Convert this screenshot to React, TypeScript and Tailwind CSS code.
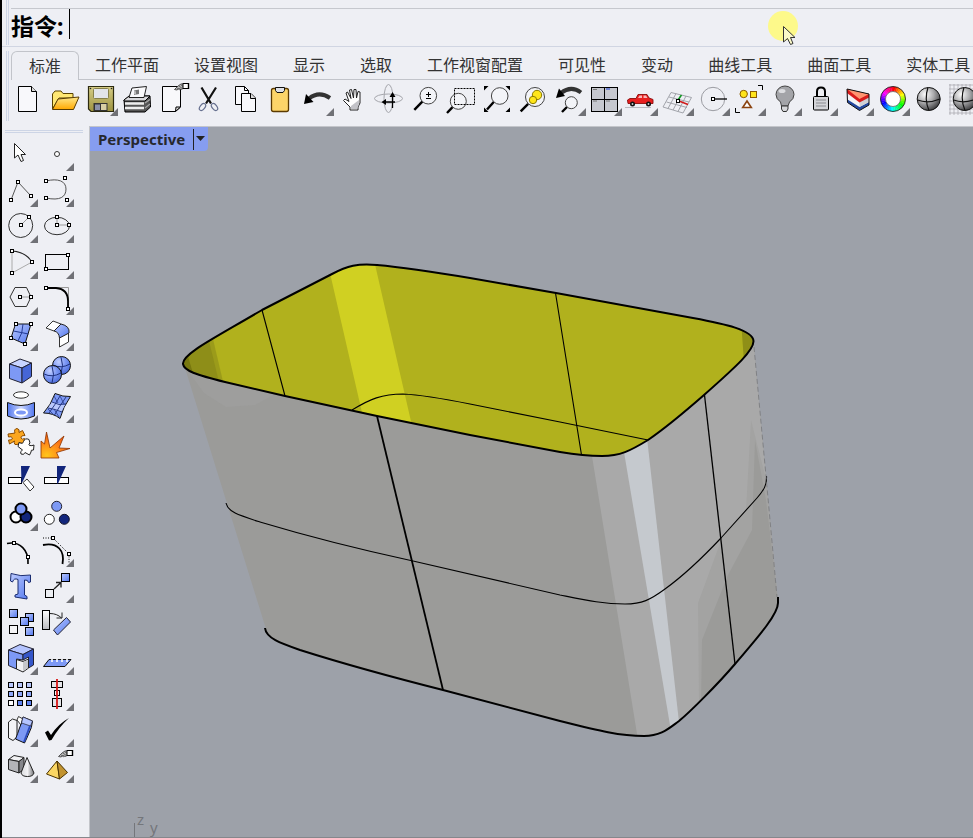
import type { ReactNode } from "react";

type Tool = { name: string; art: ReactNode; more?: boolean };

const BLUE = "#7d99f5";
const NAVY = "#12267c";

/* Small square grip drawn on curve control points. */
function Grip({ x, y }: { x: number; y: number }) {
  return <rect x={x - 1.5} y={y - 1.5} width="3" height="3" fill="#fff" stroke="#000" shapeRendering="crispEdges" />;
}

function Box({ x, y, w = 8, h = 8, fill = "url(#blueGrad)" }: { x: number; y: number; w?: number; h?: number; fill?: string }) {
  return <rect x={x} y={y} width={w} height={h} fill={fill} stroke="#000" />;
}

function Lens({ cx, cy, r, hx, hy }: { cx: number; cy: number; r: number; hx: number; hy: number }) {
  const d = r * 0.72;
  return (
    <>
      <path d={`M${cx - d} ${cy + d}L${hx} ${hy}`} stroke="#000" strokeWidth="2.4" />
      <circle cx={cx} cy={cy} r={r} fill="#f6f7fa" fillOpacity="0.6" stroke="#444" />
    </>
  );
}

function PointingHand() {
  return (
    <>
      <path d="M19.5 7.5L23 4L26 2L30 1.5H32V6H29L26 7.5L24 6.5L22 8Z" fill="#b9b9b9" stroke="#333" strokeWidth="0.8" />
      <path d="M22 6l3 2M24 4l4 3M26 3l3 2" stroke="#444" strokeWidth="0.7" />
      <path d="M28 1.5h5.5v5H28Z" fill="#fff" stroke="#000" />
      <path d="M33.5 1v6" stroke="#000" strokeWidth="1.4" />
    </>
  );
}

function Sphere() {
  return (
    <>
      <circle cx="17.7" cy="17" r="11.5" fill="url(#sphereGrad)" stroke="#111" />
      <path d="M6.5 18Q17 22 29 17M17 5.5Q13 17 18 28.5" stroke="#111" strokeWidth="1.2" fill="none" />
    </>
  );
}

/* Hue ring: red at the top, running clockwise through yellow, green and blue. */
function ColourWheel() {
  const steps = 36;
  return (
    <>
      {Array.from({ length: steps }, (_, i) => {
        const a = (i * 2 * Math.PI) / steps;
        const b = ((i + 1.15) * 2 * Math.PI) / steps;
        const p = (r: number, t: number) => `${18 + r * Math.sin(t)} ${17 - r * Math.cos(t)}`;
        return (
          <path
            key={i}
            d={`M${p(12.5, a)}L${p(12.5, b)}L${p(7.5, b)}L${p(7.5, a)}Z`}
            fill={`hsl(${(i * 360) / steps} 100% 50%)`}
          />
        );
      })}
      <circle cx="18" cy="17" r="12.5" fill="none" stroke="#222" strokeWidth="0.9" />
      <circle cx="18" cy="17" r="7.5" fill="#fff" stroke="#555" strokeWidth="0.7" />
    </>
  );
}

const standardTools: Tool[] = [
  {
    name: "新建",
    art: (
      <>
        <path d="M7.5 4.5H20.5L25.5 9.5V29.5H7.5Z" fill="#f8f8fb" stroke="#000" />
        <path d="M20.5 4.5V9.5H25.5" fill="#ddd" stroke="#000" />
      </>
    ),
  },
  {
    name: "打开",
    art: (
      <>
        <path d="M5.5 27V12L8 9H14L16 11.5H26V16H12Z" fill="#ffe873" stroke="#5a4300" />
        <path d="M11 17L32 15L26.5 27.5L5.5 27.5Z" fill="url(#goldGrad)" stroke="#5a3d00" />
      </>
    ),
  },
  {
    name: "保存",
    more: true,
    art: (
      <>
        <path d="M5.5 4.5H30.5V29.5H8L5.5 27Z" fill="url(#oliveGrad)" stroke="#2c2a10" strokeWidth="1.2" />
        <rect x="10.5" y="6.5" width="15" height="10" rx="1" fill="#e2e4ea" stroke="#86804a" />
        <rect x="10.5" y="21" width="14" height="8" fill="#333" />
        <rect x="12" y="22.5" width="5" height="5.5" fill="#8a90a8" />
        <rect x="18" y="22" width="5.5" height="6" fill="#d8cfa4" />
        <circle cx="7.5" cy="6.5" r="0.8" fill="#222" />
        <circle cx="28.5" cy="6.5" r="0.8" fill="#222" />
      </>
    ),
  },
  {
    name: "打印",
    art: (
      <>
        <path d="M5 18L11 14H31L31.5 25L26 30H6Z" fill="#555" stroke="#000" />
        <path d="M5 18L10 14H31L26 19H5Z" fill="#d9d9dc" stroke="#000" />
        <path d="M6 21.5H25M6 26H25" stroke="#eee" strokeWidth="2.4" fill="none" />
        <path d="M26 21L31 17.5M26 26L31 22" stroke="#aaa" strokeWidth="1.2" fill="none" />
        <path d="M10 15.5L13 6L27.5 4.5L25 15.5Z" fill="#fafafc" stroke="#222" />
        <path d="M15 8.5L20 7.5V12L15 13Z" fill="#777" />
        <path d="M15 8.5L17 9.5V13L15 12Z" fill="#bbb" />
      </>
    ),
  },
  {
    name: "文件属性",
    art: (
      <>
        <path d="M7.5 4.5H25.5V25L20.5 29.5H7.5Z" fill="#f8f8fb" stroke="#000" />
        <path d="M20.5 29.5L21 25H25.5Z" fill="#ddd" stroke="#000" />
        <PointingHand />
      </>
    ),
  },
  {
    name: "剪切",
    art: (
      <>
        <path d="M10.5 5.5L20 21.5M25 5.5L15 21.5" stroke="#111" strokeWidth="2.2" />
        <ellipse cx="11.5" cy="25" rx="2.4" ry="4" transform="rotate(38 11.5 25)" fill="none" stroke="#66708f" strokeWidth="1.2" />
        <ellipse cx="23.5" cy="25" rx="2.4" ry="4" transform="rotate(-38 23.5 25)" fill="none" stroke="#66708f" strokeWidth="1.2" />
      </>
    ),
  },
  {
    name: "复制",
    art: (
      <>
        <path d="M8.5 4.5H17.5L21.5 8.5V22.5H8.5Z" fill="#f8f8fb" stroke="#000" />
        <path d="M17.5 4.5V8.5H21.5" fill="none" stroke="#000" />
        <path d="M14.5 11.5H24L28.5 16V29.5H14.5Z" fill="#f8f8fb" stroke="#000" />
        <path d="M23.5 11.5V16.5H28.5" fill="#ddd" stroke="#000" />
      </>
    ),
  },
  {
    name: "粘贴",
    art: (
      <>
        <rect x="8.5" y="6.5" width="17" height="23" rx="2" fill="#fdd569" stroke="#5b3a00" strokeWidth="1.3" />
        <path d="M12.5 5.5H21.5V8.5L20 10.5H14L12.5 8.5Z" fill="#dfe1e6" stroke="#111" />
      </>
    ),
  },
  {
    name: "复原",
    more: true,
    art: (
      <>
        <path d="M10 16.5Q20 8.5 31 16" stroke="#333" strokeWidth="4" fill="none" />
        <path d="M5 22L7 12L14.5 20Z" fill="#000" />
      </>
    ),
  },
  {
    name: "平移视图",
    art: (
      <>
        <path d="M15 28V25L8.5 18.5L10 17L14 19.5L11 11L12.5 10L16 16.5L14.5 8L16.5 7.5L18.5 16L19 7.5L21 7.5L21.5 16L23 9.5L25 10L25 21L23 25V28Z" fill="#fff" stroke="#222" />
        <path d="M16 24L24 18V22L22 27H16Z" fill="#c3c3c8" />
      </>
    ),
  },
  {
    name: "旋转视图",
    art: (
      <>
        <ellipse cx="17.5" cy="16.5" rx="4.5" ry="14" fill="none" stroke="#a5a6ac" />
        <ellipse cx="17.5" cy="16.5" rx="14" ry="4.5" fill="none" stroke="#a5a6ac" />
        <path d="M21.5 26V14M24 20H14" stroke="#000" strokeWidth="1.3" />
        <path d="M21.5 10L24.5 15H18.5ZM10.5 20L15 17V23Z" fill="#000" />
      </>
    ),
  },
  {
    name: "缩放",
    art: (
      <>
        <Lens cx={21.3} cy={13.7} r={8.3} hx={7.3} hy={27.8} />
        <path d="M19 12.5H24M21.5 10V15M19 16.5H24" stroke="#000" />
      </>
    ),
  },
  {
    name: "框选缩放",
    art: (
      <>
        <Lens cx={15.3} cy={19.3} r={8} hx={4} hy={31} />
        <rect x="11.5" y="6.5" width="20" height="16" fill="none" stroke="#000" strokeDasharray="2 1" />
      </>
    ),
  },
  {
    name: "缩放至最大范围",
    art: (
      <>
        <Lens cx={20.7} cy={14} r={8.3} hx={8} hy={27.5} />
        <path d="M5 4H9.5L5 8.5ZM31 4V8.5L26.5 4ZM5 30V25.5L9.5 30ZM31 30H26.5L31 25.5Z" fill="#000" />
      </>
    ),
  },
  {
    name: "缩放至选取物件",
    art: (
      <>
        <Lens cx={20} cy={15} r={9.5} hx={5.7} hy={29.3} />
        <circle cx="22" cy="13" r="4.7" fill="#ffe61a" stroke="#8a7a00" />
        <circle cx="18" cy="18" r="3.7" fill="#ffe61a" stroke="#8a7a00" />
      </>
    ),
  },
  {
    name: "复原视图变更",
    more: true,
    art: (
      <>
        <Lens cx={20.3} cy={20.7} r={6} hx={11} hy={30} />
        <path d="M10 11Q20 3 30 10.5" stroke="#333" strokeWidth="4" fill="none" />
        <path d="M5 16L8 6.5L14 14Z" fill="#000" />
      </>
    ),
  },
  {
    name: "四个工作视窗",
    more: true,
    art: (
      <>
        <rect x="4.5" y="5.5" width="26" height="24" fill="#c6c8cf" stroke="#000" />
        <path d="M17.5 5.5V29.5M4.5 17.5H30.5" stroke="#000" />
        <path d="M6 7.5H10M6 19H10M19 19H23" stroke="#777" />
        <path d="M19 7H23" stroke="#1a3fd0" />
      </>
    ),
  },
  {
    name: "汽车",
    more: true,
    art: (
      <>
        <path d="M2 25.5H28" stroke="#b9bac0" />
        <path d="M4.5 18L7 16.5L13 16.5L15 12.5H24L26 16L30 17.5V21.5H5Z" fill="#e81f1f" stroke="#8a0b0b" strokeWidth="0.9" />
        <path d="M15 16L16.5 13.5H19V16ZM20.5 13.5H23L24.5 16H20.5Z" fill="#f7b8b8" />
        <circle cx="9.5" cy="22" r="2.5" fill="#111" />
        <circle cx="9.5" cy="22" r="0.9" fill="#ccc" />
        <circle cx="25.5" cy="22" r="2.5" fill="#111" />
        <circle cx="25.5" cy="22" r="0.9" fill="#ccc" />
      </>
    ),
  },
  {
    name: "设置工作平面",
    more: true,
    art: (
      <>
        <path
          d="M12 10.5L32.5 15.5M10 15L30 20M7.5 20L28 25.5M4 25L24 31M12 10.5L4 25M17 11.5L9 26.5M22 13L14 28M27 14L19 29.5M32.5 15.5L24 31"
          stroke="#9a9ca3"
          strokeWidth="0.9"
          fill="none"
        />
        <path d="M19 18L22.5 13" stroke="#0c9a1e" strokeWidth="1.5" />
        <path d="M20 19L29 22.5" stroke="#d01818" strokeWidth="1.5" />
        <Grip x={19} y={19} />
      </>
    ),
  },
  {
    name: "对象捕捉",
    more: true,
    art: (
      <>
        <circle cx="18" cy="17" r="11.7" fill="none" stroke="#9b9ca2" />
        <path d="M20 17H32" stroke="#000" strokeWidth="1.3" />
        <Grip x={18} y={17} />
      </>
    ),
  },
  {
    name: "选取",
    more: true,
    art: (
      <>
        <circle cx="12.7" cy="12" r="3.7" fill="#ffe41a" stroke="#8a5a00" />
        <rect x="19.5" y="9.5" width="6" height="6" fill="#ffe41a" stroke="#8a5a00" />
        <path d="M16 19L11.7 25.5H20.3Z" fill="#fff" stroke="#8b4310" strokeWidth="1.6" />
        <path d="M27 3.5H31.5V8M4.5 26V30.5H9" fill="none" stroke="#000" />
      </>
    ),
  },
  {
    name: "隐藏物件",
    more: true,
    art: (
      <>
        <path d="M14.5 24L13.5 20Q9 17 9 12.5A9 8.5 0 0 1 27 12.5Q27 17 22.5 20L21 24Z" fill="#a3a4a8" stroke="#444" />
        <ellipse cx="15" cy="9" rx="3.5" ry="2" fill="#dcdde0" />
        <path d="M14.5 24H21V27L19.5 29.5H16L14.5 27Z" fill="#d5d6d9" stroke="#333" />
      </>
    ),
  },
  {
    name: "锁定物件",
    more: true,
    art: (
      <>
        <path d="M14 14V9.5Q14 5.5 18 5.5T22 9.5V14" fill="none" stroke="#000" strokeWidth="2" />
        <rect x="10.5" y="14.5" width="15" height="13.5" rx="1" fill="#d3d4d8" stroke="#000" />
        <path d="M13 18H23M13 21H23M13 24H23" stroke="#8a8b90" />
      </>
    ),
  },
  {
    name: "图层",
    more: true,
    art: (
      <>
        <path d="M8 7L30 12V23L20.5 28.5L8.5 20.5Z" fill="#24489f" />
        <path d="M8 7L30 12V20L20.5 25L8.5 17.5Z" fill="#f4f4f6" />
        <path d="M20.5 17L30 12V20L20.5 25Z" fill="#cfd0d5" />
        <path d="M8 7L30 12V15.5L20.5 20.5L8 11Z" fill="#d81b1b" />
        <path d="M8 7L30 12L20.5 17Z" fill="#ff9470" />
        <path d="M8 7L30 12V23L20.5 28.5L8.5 20.5Z" stroke="#111" />
      </>
    ),
  },
  { name: "颜色", more: true, art: <ColourWheel /> },
  { name: "着色", art: <Sphere /> },
  {
    name: "着色选取物件",
    art: (
      <>
        <path d="M3 2V33M7 2V33M11 2V33M15 2V33M19 2V33M23 2V33M27 2V33M31 2V33M2 3H34M2 7H34M2 11H34M2 15H34M2 19H34M2 23H34M2 27H34M2 31H34" stroke="#a3a4aa" strokeWidth="0.7" />
        <Sphere />
      </>
    ),
  },
];

const modelTools: Tool[] = [
  {
    name: "取消选取",
    art: <path d="M11.5 6.5V21L15 18L18 24.5L20.5 23.5L18 17.5H22.5Z" fill="#fff" stroke="#222" />,
  },
  { name: "点", more: true, art: <circle cx="18" cy="17" r="2.5" fill="#fff" stroke="#333" /> },
  {
    name: "多重直线",
    more: true,
    art: (
      <>
        <path d="M8 27L15 9L28 23" fill="none" stroke="#555" />
        <Grip x={8} y={27} />
        <Grip x={15} y={9} />
        <Grip x={28} y={23} />
      </>
    ),
  },
  {
    name: "控制点曲线",
    more: true,
    art: (
      <>
        <path d="M7 8C19 5 27 8 27 16C27 24 21 28 7 25" fill="none" stroke="#555" />
        <Grip x={7} y={8} />
        <Grip x={26} y={5} />
        <Grip x={28} y={27} />
        <Grip x={7} y={25} />
      </>
    ),
  },
  {
    name: "圆",
    more: true,
    art: (
      <>
        <circle cx="17.7" cy="16.5" r="12" fill="none" stroke="#333" />
        <path d="M18 16L26 8" stroke="#999" />
        <Grip x={18} y={16} />
        <Grip x={26} y={8} />
      </>
    ),
  },
  {
    name: "椭圆",
    more: true,
    art: (
      <>
        <ellipse cx="18" cy="17" rx="12.5" ry="8.7" fill="none" stroke="#333" />
        <path d="M18 8V16H30" stroke="#999" fill="none" />
        <Grip x={18} y={8} />
        <Grip x={18} y={16} />
        <Grip x={30} y={16} />
      </>
    ),
  },
  {
    name: "圆弧",
    more: true,
    art: (
      <>
        <path d="M9 6V28L29 17" fill="none" stroke="#aaa" />
        <path d="M9 6Q23 7 29 17" fill="none" stroke="#222" strokeWidth="1.2" />
        <Grip x={9} y={6} />
        <Grip x={29} y={17} />
        <Grip x={9} y={28} />
      </>
    ),
  },
  {
    name: "矩形",
    more: true,
    art: (
      <>
        <rect x="6.5" y="9.5" width="23" height="15" fill="none" stroke="#000" />
        <Grip x={29} y={10} />
        <Grip x={7} y={24} />
      </>
    ),
  },
  {
    name: "多边形",
    more: true,
    art: (
      <>
        <path d="M7 16L12 6.5H23.5L28 16L23.5 25.5H12Z" fill="none" stroke="#333" />
        <path d="M17 16H28" stroke="#999" />
        <Grip x={17} y={16} />
        <Grip x={28} y={16} />
      </>
    ),
  },
  {
    name: "曲线圆角",
    more: true,
    art: (
      <>
        <path d="M7 6.5H29.5V28" fill="none" stroke="#999" />
        <path d="M7 7H17Q29 8 29 20V28" fill="none" stroke="#000" strokeWidth="1.8" />
        <Grip x={7} y={7} />
        <Grip x={29} y={28} />
      </>
    ),
  },
  {
    name: "曲面",
    more: true,
    art: (
      <>
        <path d="M12.5 7H28L22 27L8 21Z" fill="url(#blueGrad)" stroke="#111" />
        <path d="M20 7Q20 16 15 24M10.5 14L25.5 17" stroke="#223a94" fill="none" />
        <Grip x={13} y={7} />
        <Grip x={28} y={7} />
        <Grip x={22} y={27} />
        <Grip x={8} y={21} />
      </>
    ),
  },
  {
    name: "曲面圆角",
    more: true,
    art: (
      <>
        <path d="M7 11L14 4L22 7L15 14Z" fill="#fff" stroke="#333" />
        <path d="M20.5 20L29.5 15V25L20.5 30Z" fill="#fff" stroke="#333" />
        <path d="M15 14L22 7Q31 9 30 16L20.5 21Q20 15 15 14Z" fill="url(#blueGrad)" stroke="#222" />
      </>
    ),
  },
  {
    name: "立方体",
    more: true,
    art: (
      <>
        <path d="M6.5 11L17 6L28.5 10L19 15Z" fill="#c8d4ff" stroke="#223" />
        <path d="M6.5 11L19 15V30L6.5 25.5Z" fill={BLUE} stroke="#223" />
        <path d="M19 15L28.5 10V23.5L19 30Z" fill="#4666d6" stroke="#223" />
      </>
    ),
  },
  {
    name: "布尔运算",
    more: true,
    art: (
      <>
        <circle cx="22.5" cy="12.5" r="9" fill="url(#ballGrad)" stroke="#111" />
        <path d="M22 4Q25 12 22 21M14 12Q22 16 31 11" stroke="#1c2f7c" fill="none" />
        <circle cx="13.5" cy="21.5" r="9" fill="url(#ballGrad)" stroke="#111" />
        <path d="M13 13Q16 21 13 30M5 21Q13 25 22 20" stroke="#1c2f7c" fill="none" />
      </>
    ),
  },
  {
    name: "投影曲线",
    more: true,
    art: (
      <>
        <ellipse cx="18" cy="6" rx="7.5" ry="3.2" fill="#fff" stroke="#333" />
        <path d="M4.5 13.5Q18 19.5 31.5 13.5V27Q18 33 4.5 27Z" fill="url(#blueGradX)" stroke="#111" />
        <ellipse cx="18" cy="23.5" rx="6" ry="3" fill={BLUE} stroke="#fff" strokeWidth="2" />
      </>
    ),
  },
  {
    name: "曲面工具",
    more: true,
    art: (
      <>
        <path d="M16 4.5Q24 8 31.5 7.5Q24 18 21 29.5Q14 24 4.5 24Q12 16 16 4.5Z" fill={BLUE} stroke="#111" />
        <path d="M13 13L26 16L22 23L9 19Z" fill="#b9c8fc" />
        <path d="M21 7Q16 16 10 24M27 8Q20 18 15.5 26M13 13Q20 17 27 15M9 19Q16 20 23 23" stroke="#1c2f7c" strokeWidth="0.9" fill="none" />
        <path d="M15 7L19 14M21 7L25 15M9 20L14 25M15 20L20 28" stroke="#1c2f7c" strokeWidth="0.7" />
      </>
    ),
  },
  {
    name: "组合",
    art: (
      <>
        <path
          d="M9 8.5L12 8Q10.500 4 14 3.500Q17 4 16 7.500L19.500 5.500L22 10.500Q17.500 10.500 18 13Q19 15 21.500 13.500L21 19L16 17.500Q15.500 20.500 12 19.500Q10.500 17.500 11.500 16L6.500 19L5.500 15Q9.500 15.500 9.500 13Q8.500 11 5.500 12L5 9Z"
          fill="#fba61f"
          stroke="#8a4a00"
        />
        <path
          d="M16 17.5Q20 19.5 20.5 16.5Q22 12.5 26 14.5L27 18Q25 19 26.5 20.5Q29 21 31 20L30.5 25Q27.5 24.5 28 27L26.5 30L22 27.5Q21 30.5 18 29Q16.5 26.5 19.5 25L15 21.5Z"
          fill="#fff"
          stroke="#222"
        />
      </>
    ),
  },
  {
    name: "炸开",
    art: (
      <path d="M2 16L5.5 19L7.5 7L11 23L25 11L20 23L31 23.5L17.5 27.5L20 33H2Z" fill="url(#fireGrad)" stroke="#8a3200" strokeWidth="0.8" />
    ),
  },
  {
    name: "修剪",
    art: (
      <>
        <rect x="5.5" y="16.5" width="13" height="6" fill="#fff" stroke="#000" />
        <path d="M20 21.5L24 18L31 26L27 30Z" fill="#fff" stroke="#333" />
        <path d="M18 5H27L20 20L18.5 22.5Z" fill={NAVY} />
      </>
    ),
  },
  {
    name: "分割",
    art: (
      <>
        <rect x="5.5" y="16.5" width="24" height="6" fill="#fff" stroke="#000" />
        <path d="M18 5H27L19 22.5H18Z" fill={NAVY} />
      </>
    ),
  },
  {
    name: "群组",
    more: true,
    art: (
      <>
        <circle cx="13" cy="20" r="5.5" fill="#fff" stroke="#000" strokeWidth="2" />
        <circle cx="23" cy="20" r="5.5" fill={NAVY} stroke="#000" strokeWidth="2" />
        <circle cx="18" cy="12" r="5.5" fill={BLUE} stroke="#000" strokeWidth="2" />
      </>
    ),
  },
  {
    name: "解散群组",
    art: (
      <>
        <circle cx="17.7" cy="9.3" r="5" fill={BLUE} stroke="#223" />
        <circle cx="10.3" cy="22.3" r="5" fill="#fff" stroke="#222" />
        <circle cx="25.3" cy="22.3" r="5" fill={NAVY} stroke="#112" />
      </>
    ),
  },
  {
    name: "编辑点",
    art: (
      <>
        <path d="M4 10.5C17 8 26 17 25 31" fill="none" stroke="#000" strokeWidth="1.6" />
        <Grip x={11} y={10} />
        <Grip x={25} y={24} />
      </>
    ),
  },
  {
    name: "控制点",
    more: true,
    art: (
      <>
        <path d="M4 12C19 9 26 18 23.5 31" fill="none" stroke="#000" strokeWidth="1.8" />
        <path d="M4 5H14L30 21V30" fill="none" stroke="#000" strokeDasharray="1 1.5" />
        <Grip x={14} y={5} />
        <Grip x={30} y={21} />
      </>
    ),
  },
  {
    name: "文字",
    art: (
      <path
        d="M8 4.5Q18 8 27.5 6V13L25.5 13.5Q25 10.5 21.5 11V26L24 27.5V30L12 28V26L15 25V10.5Q11 8.5 9.5 13L7.5 12Z"
        fill="url(#blueGrad)"
        stroke="#1a2c70"
      />
    ),
  },
  {
    name: "移动",
    more: true,
    art: (
      <>
        <path d="M15 20L22 13.5M17 13.5H22V18.5" fill="none" stroke="#222" strokeWidth="1.3" />
        <Box x={22.5} y={4.5} />
        <Box x={6.5} y={20.5} fill="#eceef2" />
      </>
    ),
  },
  {
    name: "复制物件",
    art: (
      <>
        <Box x={6.5} y={4.5} />
        <Box x={22.5} y={8.5} />
        <Box x={17.5} y={12.5} />
        <Box x={6.5} y={20.5} fill="#f4f4f6" />
        <Box x={22.5} y={22.5} />
      </>
    ),
  },
  {
    name: "旋转",
    art: (
      <>
        <Box x={3.5} y={5.5} w={7} h={19} fill="url(#greyGrad)" />
        <path d="M11 8.5Q18 8.5 22.5 13M17.5 13H23V7.5" fill="none" stroke="#222" />
        <path d="M27.5 12.5L31.5 17L18.5 30L14.5 25Z" fill="url(#blueGrad)" stroke="#223" />
      </>
    ),
  },
  {
    name: "实体工具",
    more: true,
    art: (
      <>
        <path d="M5.5 9L17 3.5L30.5 8L20 13.5Z" fill="#b4c4ff" stroke="#223" />
        <path d="M5.5 9L20 13.5V19L13.5 18V28L5.5 24.5Z" fill={BLUE} stroke="#223" />
        <path d="M20 13.5L30.5 8V24L25.5 27V16L20 19Z" fill="#3556c9" stroke="#223" />
        <path d="M13.5 18.5L20 20.5L25.5 18V27L20 31L13.5 28Z" fill="#f1f1f3" stroke="#222" />
        <path d="M20 21L25 19V27L20 30Z" fill="#c5c6ca" />
      </>
    ),
  },
  {
    name: "分析尺寸",
    more: true,
    art: (
      <>
        <path d="M10 18.5H32L26 25.5H4.5Z" fill={BLUE} stroke="#111" />
        <path d="M13 18V21M18 18V21M23 18V21M28 18V21" stroke="#fff" strokeWidth="1.6" />
      </>
    ),
  },
  {
    name: "阵列",
    more: true,
    art: (
      <>
        {[5.5, 14.5, 23.5].map((y, row) =>
          [5.5, 14.5, 23.5].map((x, col) => (
            <Box key={`${x}-${y}`} x={x} y={y} w={5} h={5} fill={row === 2 ? (col ? "#5f82f0" : "#fff") : row ? "#8fa8f8" : "#b9c8fc"} />
          )),
        )}
      </>
    ),
  },
  {
    name: "对齐",
    more: true,
    art: (
      <>
        <Box x={12.5} y={4.5} w={11} h={6} fill="#e4e5e9" />
        <Box x={15.5} y={13.5} w={5} h={5} fill="#f4f4f6" />
        <Box x={13.5} y={21.5} w={9} h={8} fill="#e4e5e9" />
        <path d="M18 2V32" stroke="#d81616" strokeWidth="1.8" />
      </>
    ),
  },
  {
    name: "变形",
    more: true,
    art: (
      <>
        <path d="M5.5 9L9.5 6L14 7.5V24L10 27.5L5.5 25Z" fill="#f4f4f6" stroke="#222" />
        <path d="M14 7L15.5 3.5L20 6L18 12Z" fill="#fff" stroke="#333" />
        <path d="M20 4L29.5 8Q29 15 26 20Q24 25 21.5 30L12.5 26Q15 20 16.5 15Q19 10 20 4Z" fill={BLUE} stroke="#111" />
        <path d="M20 4L29.5 8L27.5 13L18.5 10Z" fill="#b4c4ff" stroke="#223" strokeWidth="0.7" />
        <path d="M27 13Q24 21 21 29" stroke="#2c4bbd" strokeWidth="2" fill="none" />
      </>
    ),
  },
  {
    name: "检查",
    more: true,
    art: <path d="M6 19.5L9 17.5L12 22Q19 11 30 5Q20 14 12.5 27L10 27.5Z" fill="#000" />,
  },
  {
    name: "渲染物件",
    more: true,
    art: (
      <>
        <path d="M5.5 10.5L11 6.5L21 8.5L16 12.5Z" fill="#f1f1f3" stroke="#222" />
        <path d="M5.5 10.5L16 12.5V24L5.5 20.5Z" fill="#b4b5b9" stroke="#222" />
        <path d="M16 12.5L21 8.5V20L16 24Z" fill="#85868a" stroke="#222" />
        <path d="M24 8.5L31 24Q30 27.5 24.5 27.5T18 24Z" fill="url(#greyGradX)" stroke="#222" />
      </>
    ),
  },
  {
    name: "工具属性",
    more: true,
    art: (
      <>
        <path d="M18 12L7.5 25L20.5 30Z" fill="#fbd663" stroke="#4a3200" />
        <path d="M18 12L28.5 23.5L20.5 30Z" fill="#c2932f" stroke="#4a3200" />
        <PointingHand />
      </>
    ),
  },
];

const tabs = ["标准", "工作平面", "设置视图", "显示", "选取", "工作视窗配置", "可见性", "变动", "曲线工具", "曲面工具", "实体工具"];

/* Gradients shared by every icon on the page. */
function SharedPaint() {
  const stops = (...colours: string[]) =>
    colours.map((c, i) => <stop key={i} offset={i / (colours.length - 1)} stopColor={c} />);
  return (
    <svg className="absolute size-0" aria-hidden="true">
      <defs>
        <linearGradient id="blueGrad" x2="1" y2="1">{stops("#bccbff", "#5277ee")}</linearGradient>
        <linearGradient id="blueGradX">{stops("#5277ee", "#c8d4ff", "#5277ee")}</linearGradient>
        <linearGradient id="goldGrad" x2="0" y2="1">{stops("#ffe98a", "#ffa800")}</linearGradient>
        <linearGradient id="oliveGrad" x2="0" y2="1">{stops("#d6cd86", "#9c9240")}</linearGradient>
        <linearGradient id="greyGrad" x2="0" y2="1">{stops("#ffffff", "#b9babf")}</linearGradient>
        <linearGradient id="greyGradX">{stops("#d9dadd", "#f2f2f4", "#707175")}</linearGradient>
        <radialGradient id="sphereGrad" cx="0.35" cy="0.3" r="0.75">{stops("#ffffff", "#a9a9ab", "#3a3a3c")}</radialGradient>
        <radialGradient id="ballGrad" cx="0.35" cy="0.3" r="0.75">{stops("#c3d0ff", "#7d99f5", "#4a6ad8")}</radialGradient>
        <radialGradient id="fireGrad" cx="0.2" cy="0.9" r="0.9">{stops("#ffc61a", "#ff8c1a", "#f2560c")}</radialGradient>
      </defs>
    </svg>
  );
}

function ToolButton({ tool }: { tool: Tool }) {
  return (
    <button type="button" aria-label={tool.name} className="size-9 shrink-0">
      <svg viewBox="0 0 36 36" className="size-9" fill="none" aria-hidden="true">
        {tool.art}
        {tool.more && <path d="M35 26V34H27Z" fill="#707176" />}
      </svg>
    </button>
  );
}

function CommandBar() {
  return (
    <div className="flex h-[47px] border-b border-[#d0d5e2] pl-1">
      <div className="h-[45px] w-[3px] border-x border-[#cdd5e6]" />
      <div className="ml-[2px] mt-2 flex grow items-start border-t border-[#c6c8ce]">
        <label htmlFor="command" className="w-[58px] text-[23px] leading-[34px] font-bold whitespace-nowrap text-black">
          指令:
        </label>
        <input id="command" className="h-[30px] min-w-0 grow border-l border-black bg-transparent px-1 text-[20px] outline-none" />
      </div>
    </div>
  );
}

function TabbedToolbar() {
  return (
    <div className="flex h-[79px] pl-1 pt-1">
      <div className="h-[70px] w-[3px] shrink-0 border-x border-[#cdd5e6]" />
      <div className="ml-[2px] min-w-0 grow">
        <div role="tablist" className="flex h-[29px] overflow-hidden">
          {tabs.map((tab, i) => (
            <button
              key={tab}
              type="button"
              role="tab"
              aria-selected={i === 0}
              className={
                i === 0
                  ? "shrink-0 rounded-t-md border border-b-0 border-[#c2c4ca] px-[17px] text-[16px] leading-[26px] whitespace-nowrap"
                  : "shrink-0 border-b border-[#c2c4ca] pl-4 pr-[19px] text-[16px] leading-[28px] whitespace-nowrap"
              }
            >
              {tab}
            </button>
          ))}
          <div className="grow border-b border-[#c2c4ca]" />
        </div>
        <div role="toolbar" aria-label="标准" className="flex overflow-hidden pt-[2px]">
          {standardTools.map((tool) => (
            <ToolButton key={tool.name} tool={tool} />
          ))}
        </div>
      </div>
    </div>
  );
}

/* Shaded open box with its isocurves, in window coordinates. */
function Scene() {
  const rim =
    "M183 364C182 354 213 339 262 310L332 274C347 266 358 263 377 265C410 268 440 273 470 278L556 293L693 318C725 324 753 330 753.5 341C754 350 738 365 704 395C680 416 664 429 648 440C630 451 620 456 602 456C585 456 572 454 560 452L470 435L377 416L285 396L225 382C197 375 184 371 183 364Z";
  const body =
    "M185 368L266 629C267 640 280 643 300 650Q360 670 443 690L560 721C600 731 620 736 644 736C661 736 668 729 679 721C690 712 718 684 735 664C750 646 779 615 778 602L766 477L753.5 341L648 380L377 380Z";
  return (
    <svg viewBox="90 127 883 710" preserveAspectRatio="xMinYMin meet" className="block w-full" fill="none" role="img" aria-label="Perspective">
      <defs>
        <clipPath id="bodyClip"><path d={body} /></clipPath>
        <clipPath id="rimClip"><path d={rim} /></clipPath>
      </defs>
      <path d={body} fill="#9b9b99" />
      <g clipPath="url(#bodyClip)">
        <path d="M186 368L204 393L226 407L255 405L275 394L240 380Z" fill="#9e9e9d" />
        <path d="M591 450L638 740L800 740V330H640Z" fill="#a9a9a9" />
        <path d="M624 452L671 731L679 722L647 438Z" fill="#c5c9ce" />
        <path d="M751 420L746 510L722 538L698 603L699 705L790 705L778 600L766 479Z" fill="#a3a3a2" />
        <path d="M755 440L752 530L728 575L702 640L701 705L790 705L778 600L766 500Z" fill="#9b9b99" />
      </g>
      <path d={rim} fill="#b1b11d" />
      <g clipPath="url(#rimClip)">
        <path d="M170 330L213 339L225 390L170 390Z" fill="#9b9b1a" />
        <path d="M170 330L209 341L221 390L170 390Z" fill="#8e8e18" />
        <path d="M170 340L187 353L195 380L170 380Z" fill="#77770f" />
        <path d="M327 260H374L413 430H366Z" fill="#d0d022" />
        <path d="M741 320L744 362L760 350V320Z" fill="#8f8f17" />
      </g>
      <g stroke="#000">
        <path d="M262 310L285 396M555.5 293L581.5 455" strokeWidth="1.1" />
        <path d="M352 410C370 399 382 394 403 394C425 395 450 400 470 404L560 422L648 440" strokeWidth="1.1" />
        <path d="M226 503C228 512 238 515 260 522Q330 543 413 561L560 595C585 600 603 604 625 604C642 604 650 600 665 589C683 576 705 555 721 538L757 498C764 490 767 485 766.5 476" strokeWidth="1.1" />
        <path d="M377 416L443 690" strokeWidth="1.8" />
        <path d="M704.5 395L735 664" strokeWidth="1.3" />
        <path d={rim} strokeWidth="2" />
        <path d="M265 628C266 638 280 643 300 650Q360 669 443 690L560 721C600 731 620 736 644 736C661 736 668 729 679 721C690 712 718 684 735 664C750 646 779 615 778 602V597" strokeWidth="2" />
      </g>
      <path d="M754 347L766 476L777 597" stroke="#77787c" strokeDasharray="5 3" strokeWidth="0.8" />
      <path d="M134.5 823V838" stroke="#74767b" />
      <g fill="#74767b" fontSize="15">
        <text x="137" y="825">z</text>
        <text x="150" y="833">y</text>
      </g>
    </svg>
  );
}

function MousePointer() {
  return (
    <svg className="pointer-events-none absolute left-[765px] top-[10px]" width="32" height="36" viewBox="0 0 32 36" aria-hidden="true">
      <circle cx="16" cy="16" r="15" fill="#fdf98a" />
      <path d="M16.5 16.5V32L20.5 28.5L23.5 34.5L26 33.5L23.5 27.5H28Z" fill="#fbf9c8" stroke="#333" />
    </svg>
  );
}

export default function App() {
  return (
    <div className="relative flex min-h-screen flex-col overflow-hidden border-l-2 border-black bg-[#eeeff4] font-['Noto_Sans','Noto_Sans_CJK_SC',sans-serif] text-[#333]">
      <SharedPaint />
      <CommandBar />
      <TabbedToolbar />
      <div className="flex grow items-stretch border-b border-[#85878c]">
        <aside className="w-[87px] shrink-0 pl-px">
          <div className="ml-[2px] mr-[6px] mt-1 mb-1 h-[3px] border-y border-[#cdd5e6]" />
          <div role="toolbar" aria-label="建模工具" className="grid w-[72px] grid-cols-2">
            {modelTools.map((tool) => (
              <ToolButton key={tool.name} tool={tool} />
            ))}
          </div>
        </aside>
        <main className="relative min-w-0 grow overflow-hidden border-l border-t border-[#c3c5ca] bg-[#9da1a9]">
          <Scene />
          <div className="absolute left-0 top-0 flex h-6 items-center rounded-br bg-[#869df0] pr-[2px] font-['Noto_Sans'] text-[15px] font-bold text-[#26282e]">
            <button type="button" className="px-2 leading-[22px]">Perspective</button>
            <button type="button" aria-label="视图菜单" className="flex h-[21px] w-[13px] items-center justify-center border-l border-[#222]">
              <svg width="9" height="6" viewBox="0 0 9 6" aria-hidden="true">
                <path d="M0 0H9L4.5 5Z" fill="#222" />
              </svg>
            </button>
          </div>
        </main>
      </div>
      <MousePointer />
    </div>
  );
}
